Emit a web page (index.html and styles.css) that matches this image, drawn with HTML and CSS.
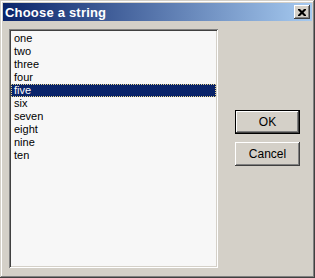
FILE: index.html
```html
<!DOCTYPE html>
<html lang="en">
<head>
    <meta charset="UTF-8">
    <title>Choose a string</title>
    <link rel="stylesheet" href="styles.css">
</head>
<body>
    <div class="window">
        <div class="titlebar">
            <span class="title">Choose a string</span>
            <button class="close-btn" aria-label="Close">
                <svg width="8" height="7" viewBox="0 0 8 7">
                    <path d="M0 0h2l2 2 2-2h2v1l-2.5 2.5 2.5 2.5v1h-2l-2-2-2 2h-2v-1l2.5-2.5-2.5-2.5z" fill="#000"/>
                </svg>
            </button>
        </div>

        <div class="client">
            <ul class="listbox">
                <li>one</li>
                <li>two</li>
                <li>three</li>
                <li>four</li>
                <li class="selected">five</li>
                <li>six</li>
                <li>seven</li>
                <li>eight</li>
                <li>nine</li>
                <li>ten</li>
            </ul>

            <div class="buttons">
                <button class="btn default">OK</button>
                <button class="btn">Cancel</button>
            </div>
        </div>
    </div>
</body>
</html>
```

FILE: styles.css
```css
* {
    box-sizing: border-box;
}

body {
    margin: 0;
    background: #d4d0c8;
    font-family: "Liberation Sans", Arial, sans-serif;
    font-size: 11px;
    color: #000;
}

/* outer dialog frame */
.window {
    width: 315px;
    height: 278px;
    padding: 3px;
    background: #d4d0c8;
    box-shadow: inset -1px -1px #404040, inset 1px 1px #d4d0c8,
                inset -2px -2px #808080, inset 2px 2px #ffffff;
    display: flex;
    flex-direction: column;
}

.titlebar {
    height: 18px;
    display: flex;
    align-items: center;
    justify-content: space-between;
    padding: 0 2px 0 2px;
    background: linear-gradient(to right, #0a246a, #a6caf0);
}

.title {
    color: #fff;
    font-weight: bold;
    font-size: 13px;
    letter-spacing: 0.2px;
}

.close-btn {
    width: 16px;
    height: 14px;
    padding: 0;
    border: none;
    background: #d4d0c8;
    box-shadow: inset -1px -1px #404040, inset 1px 1px #ffffff,
                inset -2px -2px #808080, inset 2px 2px #d4d0c8;
    display: flex;
    align-items: center;
    justify-content: center;
}

.close-btn svg {
    display: block;
}

.client {
    flex: 1;
    display: flex;
    padding: 8px 0 0 6px;
}

/* list box */
.listbox {
    width: 209px;
    height: 239px;
    margin: 0;
    padding: 3px 2px 2px 2px;
    list-style: none;
    background: #f7f7f7;
    box-shadow: inset 1px 1px #808080, inset -1px -1px #ffffff,
                inset 2px 2px #404040, inset -2px -2px #d4d0c8;
}

.listbox li {
    height: 13px;
    line-height: 13px;
    padding-left: 3px;
}

.listbox li.selected {
    background: #0a246a;
    color: #fff;
    outline: 1px dotted #e6d58c;
    outline-offset: -1px;
}

.buttons {
    display: flex;
    flex-direction: column;
    gap: 8px;
    margin: 81px 0 0 17px;
}

.btn {
    width: 65px;
    height: 24px;
    padding: 0;
    border: none;
    background: #d4d0c8;
    font-family: "Liberation Sans", Arial, sans-serif;
    font-size: 12px;
    color: #000;
    box-shadow: inset -1px -1px #404040, inset 1px 1px #ffffff,
                inset -2px -2px #808080, inset 2px 2px #d4d0c8;
}

.btn.default {
    border: 1px solid #000;
}
```
